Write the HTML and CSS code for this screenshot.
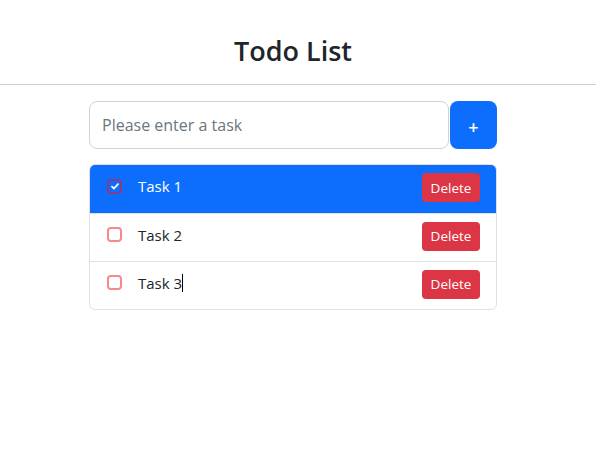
FILE: index.html
```html
<!DOCTYPE html>
<html>
<head>
<meta charset="utf-8">
<link rel="stylesheet" href="styles.css">
</head>
<body>
<header class="header"><h1 class="title">Todo List</h1></header>
<main class="main">
  <div class="input-group">
    <input class="task-input" type="text" placeholder="Please enter a task">
    <button class="add-btn">+</button>
  </div>
  <ul class="list">
    <li class="item active">
      <span class="check checked"><svg width="8" height="7" viewBox="0 0 8 7"><path d="M1 3.6 L3 5.5 L7 1.2" fill="none" stroke="#fff" stroke-width="1.8" stroke-linecap="round" stroke-linejoin="round"/></svg></span>
      <span class="text">Task 1</span>
      <button class="del">Delete</button>
    </li>
    <li class="item">
      <span class="check"></span>
      <span class="text">Task 2</span>
      <button class="del">Delete</button>
    </li>
    <li class="item">
      <span class="check"></span>
      <span class="text">Task 3<span class="caret"></span></span>
      <button class="del">Delete</button>
    </li>
  </ul>
</main>
</body>
</html>
```
FILE: styles.css
```css
* { box-sizing: border-box; }
body {
  margin: 0;
  font-family: "Open Sans", "Noto Sans", sans-serif;
  color: #212529;
  background: #fff;
}
.header {
  border-bottom: 1px solid #cfcfcf;
  padding: 33px 10px 15px 0;
  text-align: center;
}
.title {
  margin: 0;
  font-size: 27px;
  font-weight: 600;
  line-height: 36px;
}
.main {
  width: 408px;
  margin: 16px 0 0 89px;
}
.input-group {
  display: flex;
  gap: 1px;
  height: 48px;
}
.task-input {
  width: 360px;
  height: 48px;
  border: 1px solid #ced4da;
  border-radius: 8px;
  padding: 0 12px;
  font-family: inherit;
  font-size: 16px;
  color: #212529;
  outline: none;
}
.task-input::placeholder { color: #6c757d; }
.add-btn {
  flex: 1;
  border: none;
  border-radius: 8px;
  background: #0d6efd;
  color: #fff;
  font-family: inherit;
  font-size: 18px;
  font-weight: 600;
  padding: 4px 0 0;
}
.list {
  list-style: none;
  margin: 15px 0 0;
  padding: 0;
  border: 1px solid #dee2e6;
  border-radius: 6px;
  overflow: hidden;
}
.item {
  display: flex;
  align-items: center;
  height: 48px;
  padding: 0 16px 0 17px;
  border-top: 1px solid #dee2e6;
  font-size: 15px;
}
.item:first-child { border-top: none; height: 48px; }
.item.active { background: #0d6efd; color: #fff; }
.check {
  width: 15px;
  height: 15px;
  border: 2px solid #f58a8a;
  border-radius: 4px;
  margin-top: -6px;
  display: flex;
  align-items: center;
  justify-content: center;
}
.check.checked { border-color: #8a3a86; }
.text {
  flex: 1;
  margin-left: 16px;
  margin-top: -6px;
  display: flex;
  align-items: center;
}
.caret {
  display: inline-block;
  width: 1px;
  height: 18px;
  background: #000;
}
.del {
  border: none;
  border-radius: 4px;
  background: #dc3545;
  color: #fff;
  font-family: inherit;
  font-size: 13.5px;
  width: 58px;
  height: 29px;
  padding: 0;
  margin-top: -3px;
}
```
